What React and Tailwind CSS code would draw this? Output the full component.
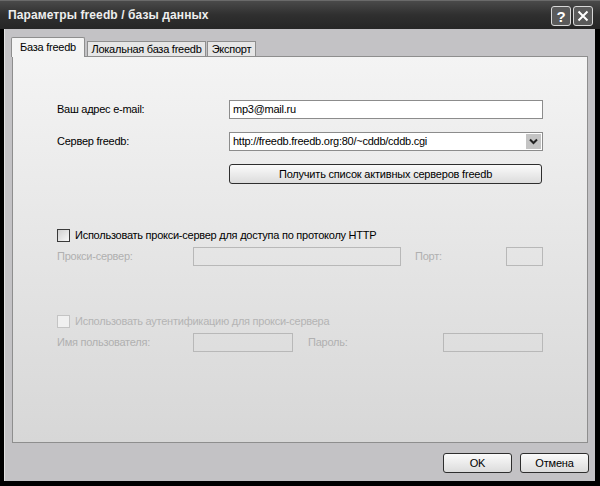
import React from "react";

const font = { fontFamily: '"Liberation Sans", Arial, sans-serif' };

const Field = ({ w, disabled, children, className = "" }) => (
  <div
    className={`h-[19px] flex items-center px-[3px] ${
      disabled ? "border border-[#b8b8b8]" : "border border-[#8c8c8c] bg-white text-black"
    } ${w} ${className}`}
  >
    {children}
  </div>
);

const Btn = ({ w, children }) => (
  <button
    className={`h-[20px] ${w} rounded-[3px] border border-[#2e2e2e] bg-gradient-to-b from-[#fbfbfb] to-[#dcdcdc] text-[11px] tracking-[-0.2px] text-black flex items-center justify-center`}
  >
    {children}
  </button>
);

export default function App() {
  return (
    <div className="w-[600px] h-[486px] bg-black overflow-hidden" style={font}>
      {/* title bar */}
      <div className="h-[29px] flex items-center justify-between pl-[8px] pr-[7px] bg-gradient-to-b from-[#4a4a4a] via-[#2f2f2f] to-[#262626] border-t border-[#6a6a6a]">
        <span className="text-[12px] font-bold text-[#eeeeee] tracking-[0.1px]">
          Параметры freedb / базы данных
        </span>
        <div className="flex gap-[2px] mt-[2px]">
          <div className="w-[20px] h-[20px] rounded-[3px] border border-[#d8d8d8] bg-[#5a5a5a] flex items-center justify-center text-white font-bold text-[15px] leading-none">
            ?
          </div>
          <div className="w-[20px] h-[20px] rounded-[3px] border border-[#d8d8d8] bg-[#5a5a5a] flex items-center justify-center">
            <svg width="12" height="12" viewBox="0 0 12 12">
              <path d="M1.5 1.5 L10.5 10.5 M10.5 1.5 L1.5 10.5" stroke="#fff" strokeWidth="2" />
            </svg>
          </div>
        </div>
      </div>

      {/* body */}
      <div className="ml-[4px] mr-[5px] h-[452px] bg-[#c3c2c5] border-l border-[#e0e0e0] pt-[8px] px-[6px] flex flex-col text-[11px] tracking-[-0.25px]">
        {/* tabs */}
        <div className="flex items-end h-[19px] text-black relative z-10 whitespace-nowrap">
          <div className="h-[20px] w-[74px] bg-[#f4f4f4] border border-b-0 border-[#8e8e8e] rounded-t-[2px] flex items-center justify-center -mb-[1px]">
            База freedb
          </div>
          <div className="h-[15px] w-[119px] ml-[2px] bg-[#e6e6e6] border border-b-0 border-[#8e8e8e] flex items-center justify-center">
            Локальная база freedb
          </div>
          <div className="h-[15px] w-[49px] ml-[1px] bg-[#e6e6e6] border border-b-0 border-[#8e8e8e] flex items-center justify-center">
            Экспорт
          </div>
        </div>

        {/* panel */}
        <div className="ml-[1px] w-[576px] h-[387px] border border-[#8e8e8e] bg-gradient-to-b from-[#f4f4f4] to-[#d7d7d7] pl-[44px] text-black whitespace-nowrap">
          <div className="mt-[43px] flex items-center">
            <span className="w-[172px]">Ваш адрес e-mail:</span>
            <Field w="w-[314px]">mp3@mail.ru</Field>
          </div>
          <div className="mt-[13px] flex items-center">
            <span className="w-[172px]">Сервер freedb:</span>
            <Field w="w-[314px]" className="justify-between pr-[1px]">
              <span>http://freedb.freedb.org:80/~cddb/cddb.cgi</span>
              <span className="w-[15px] h-[15px] bg-[#c4c4c4] flex items-center justify-center">
                <svg width="9" height="7" viewBox="0 0 9 7">
                  <path d="M1 1.5 L4.5 5 L8 1.5" stroke="#222" strokeWidth="2" fill="none" />
                </svg>
              </span>
            </Field>
          </div>
          <div className="mt-[13px] pl-[172px]">
            <Btn w="w-[313px]">Получить список активных серверов freedb</Btn>
          </div>

          <div className="mt-[44px] flex items-center h-[14px]">
            <div className="w-[13px] h-[13px] border border-[#3a3a3a] bg-gradient-to-br from-[#d0d0d0] to-[#f8f8f8]" />
            <span className="ml-[5px]">Использовать прокси-сервер для доступа по протоколу HTTP</span>
          </div>
          <div className="mt-[5px] flex items-center text-[#b0b0b0]">
            <span className="w-[136px]">Прокси-сервер:</span>
            <Field w="w-[208px]" disabled />
            <span className="ml-[14px] w-[91px]">Порт:</span>
            <Field w="w-[37px]" disabled />
          </div>

          <div className="mt-[48px] flex items-center h-[14px] text-[#b4b4b4]">
            <div className="w-[13px] h-[13px] border border-[#c4c4c4] bg-[#f0f0f0]" />
            <span className="ml-[5px]">Использовать аутентификацию для прокси-сервера</span>
          </div>
          <div className="mt-[5px] flex items-center text-[#b0b0b0]">
            <span className="w-[136px]">Имя пользователя:</span>
            <Field w="w-[100px]" disabled />
            <span className="ml-[15px] w-[135px]">Пароль:</span>
            <Field w="w-[100px]" disabled />
          </div>
        </div>

        {/* footer buttons */}
        <div className="mt-[10px] flex justify-end gap-[8px]">
          <Btn w="w-[69px]">OK</Btn>
          <Btn w="w-[69px]">Отмена</Btn>
        </div>
      </div>
    </div>
  );
}
